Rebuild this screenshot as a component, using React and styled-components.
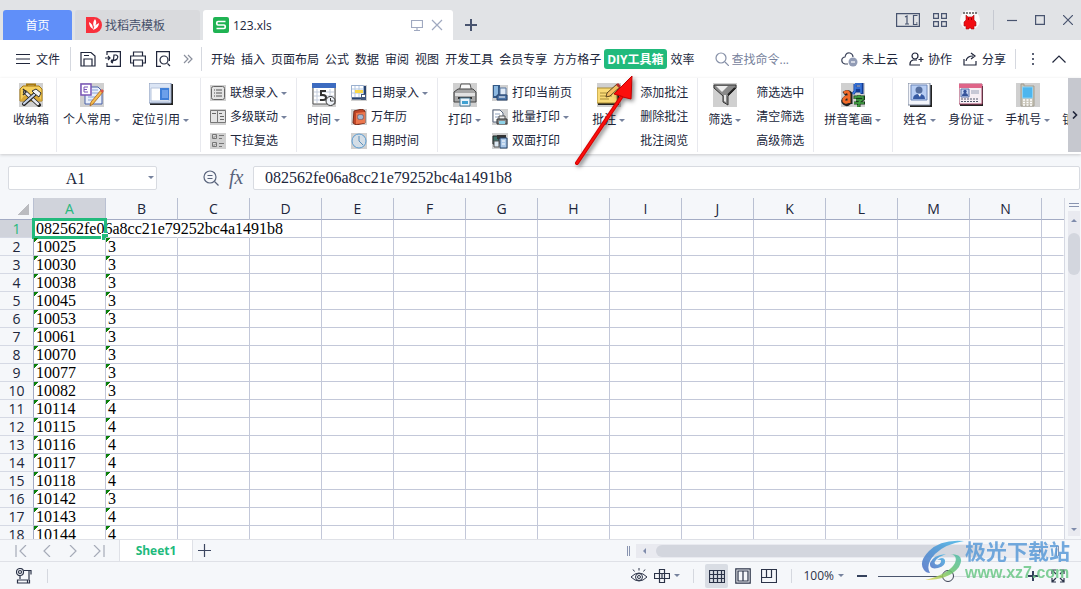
import React, { useState } from 'react';
import styled, { createGlobalStyle } from 'styled-components';

const columns = 'ABCDEFGHIJKLMN'.split('');

const rows = [
  ['082562fe06a8cc21e79252bc4a1491b8', ''],
  ['10025', '3'],
  ['10030', '3'],
  ['10038', '3'],
  ['10045', '3'],
  ['10053', '3'],
  ['10061', '3'],
  ['10070', '3'],
  ['10077', '3'],
  ['10082', '3'],
  ['10114', '4'],
  ['10115', '4'],
  ['10116', '4'],
  ['10117', '4'],
  ['10118', '4'],
  ['10142', '3'],
  ['10143', '4'],
  ['10144', '4'],
];

const menus = [
  '开始', '插入', '页面布局', '公式', '数据', '审阅', '视图',
  '开发工具', '会员专享', '方方格子', 'DIY工具箱', '效率',
];

// thin outline icons of the bars
const Line = ({ w = 16, h = 16, children }) => (
  <svg width={w} height={h} viewBox={`0 0 ${w} ${h}`} fill='none' stroke='currentColor' strokeWidth='1.2' aria-hidden='true'>
    {children}
  </svg>
);

// 24px colour icons of the ribbon
const Big = ({ plain, children }) => (
  <svg width='24' height='24' viewBox='0 0 24 24' aria-hidden='true'>
    {!plain && <path d='M0 0h24v24H0z' fill='#d0d0d0' />}
    {children}
  </svg>
);

const Small = ({ children }) => (
  <svg width='16' height='16' viewBox='0 0 16 16' aria-hidden='true'>
    <path d='M0 0h16v16H0z' fill='#d0d0d0' />
    {children}
  </svg>
);

const icons = {
  box: (
    <Big>
      <path d='M8 4V1.500h8V4' fill='none' stroke='#a87a10' strokeWidth='2' />
      <path d='M1 6l3-3h16l3 3v12H1z' fill='#f5cf5c' stroke='#a87a10' />
      <path d='M1 18l4-5h14l4 5z' fill='#d9a836' />
      <path d='M6 9l14 13' stroke='#222' strokeWidth='4' strokeLinecap='round' />
      <path d='M6 9l13 12' stroke='#e8e8ee' strokeWidth='2.4' strokeLinecap='round' />
      <path d='M17 10L5 21' stroke='#222' strokeWidth='4' strokeLinecap='round' />
      <path d='M17 10L5 20.500' stroke='#c8d4e8' strokeWidth='2.2' strokeLinecap='round' />
      <path d='M13 8l4-2 5 4-2 4-4-3z' fill='#f4f4f4' stroke='#333' />
      <path d='M4 6l3 3-3 3' fill='none' stroke='#333' strokeWidth='1.5' />
    </Big>
  ),
  personal: (
    <Big>
      <path d='M5 4h13l4 4v13H5z' fill='#e9f0fb' stroke='#4861a8' />
      <path d='M12 7h6M12 10h7M8 14h10M8 17h8' stroke='#8aa4d8' />
      <path d='M1 1h10v11H1z' fill='#fff' stroke='#7a56b8' strokeWidth='1.500' />
      <path d='M4 4h4M4 6.500h3M4 9h4M4 4v5' stroke='#7a56b8' />
      <path d='M21 7l2 2-10 12-3 2 1-4z' fill='#f5bd4f' stroke='#a86318' strokeWidth='.8' />
      <path d='M20 8l2-2 2 2-2 2z' fill='#d8574a' />
    </Big>
  ),
  locate: (
    <Big plain>
      <path d='M1 1h23v21H1z' fill='#222' />
      <path d='M0 0h22v20H0z' fill='#dbe5f5' stroke='#8c9cba' />
      <path d='M2 5h18v13H2z' fill='#fff' stroke='#b6c4dc' />
      <path d='M11 5h9v12h-9z' fill='#3f7fd8' />
      <path d='M13 7h6v8h-6z' fill='#6ca0ea' />
    </Big>
  ),
  time: (
    <Big>
      <path d='M1 3h22v18H1z' fill='#fff' stroke='#555' />
      <path d='M0 0h24v5H0z' fill='#3c6bc0' />
      <path d='M2 9h20M2 13h20M2 17h20M5 6v14M18 6v14' stroke='#c4cddd' />
      <path d='M14 8H9v4h2q3 0 3 2.500T11 17H8' fill='none' stroke='#333' strokeWidth='2' />
      <circle cx='18.500' cy='18' r='4.500' fill='#eef2f8' stroke='#333' />
      <path d='M18.500 15v3h3' fill='none' stroke='#333' />
    </Big>
  ),
  print: (
    <Big>
      <path d='M6 9l2-8h9l2 8z' fill='#fafafa' stroke='#555' />
      <path d='M1 9l4-3h15l3 3v10H1z' fill='#a6a6a6' stroke='#444' />
      <path d='M2 10h20v3H2z' fill='#e2e2e2' />
      <path d='M5 14h14v2H5z' fill='#333' />
      <path d='M7 15h10v8H7z' fill='#e9f4fb' stroke='#4b7894' />
      <path d='M9 18h6v3H9z' fill='#3fa1d2' />
    </Big>
  ),
  comment: (
    <Big>
      <path d='M1 6h21v16H1z' fill='#222' />
      <path d='M0 5h20v15H0z' fill='#f9da76' stroke='#a98b32' />
      <path d='M3 10h10M3 13h12M3 16h9' stroke='#a58a38' />
      <path d='M20 1l3 3-10 9-4 1 1-4z' fill='#f4c064' stroke='#5b4520' />
      <path d='M19 2l2-2 3 3-2 2z' fill='#b62d2d' />
    </Big>
  ),
  filter: (
    <Big>
      <path d='M1 2h22v3l-8 8v9l-5-3v-6L1 5z' fill='#8a8a8a' stroke='#333' />
      <path d='M3 3h12L9 9z' fill='#eee' />
      <path d='M11 12h2v7l-2-1z' fill='#e8e8e8' />
      <path d='M15 12l7-7' stroke='#222' strokeWidth='2' />
    </Big>
  ),
  pinyin: (
    <Big>
      <path d='M3 11q4-3 6 0v10M9 15H5q-4 3-1 5 3 2 5-2' fill='none' stroke='#222' strokeWidth='5' />
      <path d='M3 10q4-3 5 1v9M8 14H5q-4 3-1 5 2 1 4-1' fill='none' stroke='#f26a28' strokeWidth='3' />
      <path d='M14 1h7v10M14 1v7l-2 3M14 5h7M14 8h7' fill='none' stroke='#123b94' strokeWidth='3' />
      <path d='M14 1h6v9M14 1v7l-2 3M14 5h6' fill='none' stroke='#3b79e0' strokeWidth='1.500' />
      <path d='M18 12v2M14 16v-2h9v2M15 17h6l-3 2v4h-2M13 20h11' fill='none' stroke='#163b1a' strokeWidth='3' />
      <path d='M18 12v2M14 16v-2h8v2M15 17h6l-3 2v4h-2M13 20h10' fill='none' stroke='#45a845' strokeWidth='1.300' />
    </Big>
  ),
  name: (
    <Big plain>
      <path d='M2 2h22v22H2z' fill='#222' />
      <path d='M0 0h22v22H0z' fill='#f2f4fa' stroke='#7b869c' />
      <path d='M3 2h16v15H3z' fill='#b7cdf3' stroke='#6d87ba' />
      <circle cx='11' cy='7' r='3.500' fill='#566f9f' />
      <path d='M5 16q0-5 6-5t6 5z' fill='#375ba4' />
      <path d='M10 11h3l-1 3z' fill='#fff' />
    </Big>
  ),
  card: (
    <Big plain>
      <path d='M1 3h23v20H1z' fill='#222' />
      <path d='M0 1h23v20H0z' fill='#f7eff4' stroke='#a64768' />
      <path d='M0 1h23v4H0z' fill='#df6488' />
      <path d='M2 6h8v8H2z' fill='#c7d7f4' stroke='#5972a8' />
      <circle cx='6' cy='8.500' r='1.700' fill='#34539a' />
      <path d='M3 13q0-3 3-3t3 3z' fill='#34539a' />
      <path d='M12 8h8M12 10h8' stroke='#98a1b6' />
      <path d='M2 16h18M2 18.500h18' stroke='#50576a' strokeDasharray='2 1' />
    </Big>
  ),
  phone: (
    <Big>
      <path d='M5 4V1h3v2h10v20H5z' fill='#c9c5b8' stroke='#a19d90' />
      <path d='M6.500 4h10v11h-10z' fill='#4db6ee' stroke='#8ad0f4' />
      <path d='M7 17h9M7 19.500h9M7 22h9' stroke='#fff' strokeWidth='1.500' strokeDasharray='2 1.500' />
    </Big>
  ),
  list: (
    <Small>
      <rect x='1.500' y='1.500' width='13' height='13' rx='2' fill='#e4e4e4' stroke='#666' />
      <path d='M4 5h1M6 5h6M4 8h1M6 8h6M4 11h1M6 11h6' stroke='#555' />
    </Small>
  ),
  levels: (
    <Small>
      <path d='M.5 1.500h7v12h-7zM7.500 1.500h8v12h-8z' fill='#e4e4e4' stroke='#777' />
      <path d='M2 4.500h4M9 4.500h3M10 7.500h4M10 10.500h4' stroke='#666' />
    </Small>
  ),
  multi: (
    <Small>
      <path d='M2.500 1.500h4v4h-4zM2.500 9.500h4v4h-4z' fill='#ddd' stroke='#777' />
      <path d='M3 3.500l1 1 2-2M3 11.500l1 1 2-2M9 2.500h5M9 5.500h3M9 10.500h5M9 13.500h3' fill='none' stroke='#777' />
    </Small>
  ),
  dateIn: (
    <Small>
      <path d='M.5.500h12v12H.5z' fill='#fff' stroke='#9ab0cf' />
      <path d='M1 4h11M1 8h11M4 1v11M8 1v11' stroke='#b4c8e2' />
      <path d='M4 5h8v3H4z' fill='#f8d84a' />
      <path d='M1 13.500h13V1' fill='none' stroke='#26426f' strokeWidth='2' />
      <path d='M10 9h5v6h-5z' fill='#41577c' />
      <path d='M11 10h3v2h-3z' fill='#fff' />
    </Small>
  ),
  almanac: (
    <Small>
      <path d='M3 2l8-2 3 2v12l-9 2-3-2z' fill='#bf4526' stroke='#772d1c' />
      <path d='M5 4l9-1v11l-9 1z' fill='#ec774e' />
      <path d='M7 6h5v4H7z' fill='#fff' stroke='#54698c' />
      <path d='M8 8h3' stroke='#3d74bc' />
    </Small>
  ),
  clock: (
    <Small>
      <circle cx='8' cy='8' r='7' fill='#d3dde6' stroke='#5a9bd0' />
      <path d='M8 3v5l4 4' fill='none' stroke='#5a8fba' />
    </Small>
  ),
  page: (
    <Small>
      <path d='M1 0h7v13H1z' fill='#335987' />
      <path d='M2 1h4v10H2z' fill='#8cb8e0' />
      <path d='M8 3h6v7H8z' fill='#dfeaf7' stroke='#58779f' />
      <path d='M5 10h10v5H5z' fill='#4e77aa' stroke='#28456c' />
      <path d='M7 12h6' stroke='#fff' />
    </Small>
  ),
  batch: (
    <Small>
      <path d='M1 1h7l3 3v9H1z' fill='#fff' stroke='#59677e' />
      <path d='M3 5h5M3 8h4' stroke='#8fa1bd' />
      <path d='M7 7h6v4H7z' fill='#eee' stroke='#555' />
      <path d='M5 10h10v5H5z' fill='#888' stroke='#333' />
      <path d='M7 12h6v3H7z' fill='#8ed2e8' />
    </Small>
  ),
  duplex: (
    <Small>
      <path d='M1 3h6v8H1z' fill='#3d6f68' stroke='#222' />
      <path d='M5 2h9v4H5z' fill='#333' />
      <path d='M8 5h7v10H8z' fill='#a9c7e8' stroke='#24446d' />
      <path d='M2 8h5v6H2z' fill='#dce8f2' stroke='#555' />
      <path d='M10 8h3M10 11h3' stroke='#fff' />
    </Small>
  ),
};

const groups = [
  { pad: '0 7px 0 13px', big: [{ icon: 'box', label: '收纳箱', solo: true }] },
  { pad: '0 11px 0 6px', big: [{ icon: 'personal', label: '个人常用' }, { icon: 'locate', label: '定位引用' }] },
  {
    pad: '0 9px',
    small: [
      { icon: 'list', label: '联想录入', caret: true },
      { icon: 'levels', label: '多级联动', caret: true },
      { icon: 'multi', label: '下拉复选' },
    ],
  },
  {
    big: [{ icon: 'time', label: '时间' }],
    small: [
      { icon: 'dateIn', label: '日期录入', caret: true },
      { icon: 'almanac', label: '万年历' },
      { icon: 'clock', label: '日期时间' },
    ],
  },
  {
    big: [{ icon: 'print', label: '打印' }],
    small: [
      { icon: 'page', label: '打印当前页' },
      { icon: 'batch', label: '批量打印', caret: true },
      { icon: 'duplex', label: '双面打印' },
    ],
  },
  {
    gap: 15,
    big: [{ icon: 'comment', label: '批注' }],
    small: [{ label: '添加批注' }, { label: '删除批注' }, { label: '批注阅览' }],
  },
  {
    gap: 15,
    big: [{ icon: 'filter', label: '筛选' }],
    small: [{ label: '筛选选中' }, { label: '清空筛选' }, { label: '高级筛选' }],
  },
  { pad: '0 11px 0 10px', big: [{ icon: 'pinyin', label: '拼音笔画' }] },
  {
    big: [
      { icon: 'name', label: '姓名' },
      { icon: 'card', label: '身份证' },
      { icon: 'phone', label: '手机号' },
      { icon: 'card', label: '银行卡' },
    ],
  },
];

const TitleBar = () => (
  <Title>
    <HomeTab>首页</HomeTab>
    <TemplateTab>
      <svg width='16' height='16' viewBox='0 0 16 16' aria-hidden='true'>
        <path d='M0 0h8a8 8 0 0 1 0 16H0z' fill='#f9303c' />
        <path d='M9 2q3 4-1 8-2-4 1-8zM3 5q4 2 4 7-4-2-4-7zM13 6q0 5-6 7 1-5 6-7z' fill='#fff' />
      </svg>
      找稻壳模板
    </TemplateTab>
    <FileTab>
      <svg width='16' height='16' viewBox='0 0 16 16' aria-hidden='true'>
        <rect width='16' height='16' rx='2' fill='#1fb353' />
        <path d='M12.500 4.500H5q-1.200 0-1.200 1.200v1Q3.800 8 5 8h6q1.200 0 1.200 1.200v1q0 1.300-1.200 1.300H3.500' fill='none' stroke='#fff' strokeWidth='1.700' />
      </svg>
      <FileName>123.xls</FileName>
      <TabBtn aria-label='屏幕'>
        <Line w={12} h={12}>
          <path d='M.5 1.500h11v7H.5zM6 8.500v3M3 11.500h6' />
        </Line>
      </TabBtn>
      <TabBtn aria-label='关闭标签'>
        <Line w={12} h={12}>
          <path d='M1 1l10 10M11 1L1 11' />
        </Line>
      </TabBtn>
    </FileTab>
    <AddTab aria-label='新建标签'>
      <svg width='12' height='12' viewBox='0 0 12 12' stroke='currentColor' strokeWidth='2' aria-hidden='true'>
        <path d='M6 0v12M0 6h12' />
      </svg>
    </AddTab>
    <WindowBtns>
      <IconBtn aria-label='窗口布局'>
        <Line w={24} h={14}>
          <path d='M.6.600h22.800v12.800H.6zM21.500 2.500h-4v9h4M20 10h1.500M9 4l2-1v8M9 11h4' />
        </Line>
      </IconBtn>
      <IconBtn aria-label='应用'>
        <Line w={14} h={14}>
          <path d='M.6.600h4.800v4.800H.6zM8.600.600h4.800v4.800H8.600zM.6 8.600h4.800v4.800H.6zM8.600 8.600h4.800v4.800H8.600z' />
        </Line>
      </IconBtn>
      <IconBtn aria-label='账号'>
        <svg width='20' height='20' viewBox='0 0 20 20' aria-hidden='true'>
          <circle cx='10' cy='10' r='10' fill='#fafafa' />
          <path d='M3 3h14' fill='none' stroke='#555' strokeWidth='1.500' strokeDasharray='2 1' />
          <path d='M6 5l2 2h4l2-2v5l2 2v4h-2v3h-3v-1H9v1H6v-3H4v-4l2-2z' fill='#f20d12' stroke='#a11014' strokeWidth='.6' />
          <path d='M8 9h1M11 9h1' stroke='#300' />
        </svg>
      </IconBtn>
      <Divider $h={20} />
      <SizeBtns>
        <IconBtn aria-label='最小化'>
          <Line w={10} h={10}><path d='M0 5.500h10' /></Line>
        </IconBtn>
        <IconBtn aria-label='最大化'>
          <Line w={10} h={10}><path d='M.6.600h8.800v8.800H.6z' /></Line>
        </IconBtn>
        <IconBtn aria-label='关闭'>
          <Line w={10} h={10}><path d='M0 0l10 10M10 0L0 10' /></Line>
        </IconBtn>
      </SizeBtns>
    </WindowBtns>
  </Title>
);

const MenuBar = () => (
  <Menu>
    <MenuBtn>
      <Line w={14} h={12}><path d='M0 1.500h14M0 6h14M0 10.500h14' /></Line>
      文件
    </MenuBtn>
    <Divider $h={24} />
    <QuickTools>
      <IconBtn aria-label='保存'>
        <Line><path d='M1 1.500h10l4 3.500v10H1zM4 15V8h8v7M4 4.500h5' /></Line>
      </IconBtn>
      <IconBtn aria-label='输出为PDF'>
        <Line><path d='M2 4V.600h13.400v14.800H2V12M0 7h5M3 5l2 2-2 2M7 12q2-3 2-8h2q3 1 1 4-2 2-5 1-2 2 1 3' /></Line>
      </IconBtn>
      <IconBtn aria-label='打印'>
        <Line><path d='M3.500 5V1h9v4M3.500 12H.6V5h14.800v7h-2.900M3.500 9h9v6h-9z' /></Line>
      </IconBtn>
      <IconBtn aria-label='打印预览'>
        <Line><path d='M6 15.400H1.600V.600h12.800V10M12.500 12.500l2.500 2.500' /><circle cx='9' cy='9' r='4' /></Line>
      </IconBtn>
      <MoreBtn aria-label='更多'>
        <Line w={10} h={10}><path d='M1 1l4 4-4 4M5 1l4 4-4 4' /></Line>
      </MoreBtn>
    </QuickTools>
    <Divider $h={24} />
    <MenuList>
      {menus.map((name) => (
        <MenuItem key={name} $active={name === 'DIY工具箱'}>{name}</MenuItem>
      ))}
    </MenuList>
    <Search>
      <Line w={14} h={14}><circle cx='6' cy='6' r='5' /><path d='M10 10l4 4' /></Line>
      <input aria-label='查找命令' placeholder='查找命令...' />
    </Search>
    <MenuRight>
      <ShareBtn>
        <svg width='17' height='16' viewBox='0 0 17 16' fill='none' stroke='#40485f' strokeWidth='1.200' aria-hidden='true'>
          <path d='M7 13H4q-4-1-3-5 1-2 3-2 1-5 5-4 3 1 3 4' />
          <circle cx='12' cy='11' r='4.500' fill='#919bb5' stroke='none' />
          <path d='M10 11h4' stroke='#fff' />
        </svg>
        未上云
      </ShareBtn>
      <ShareBtn>
        <Line w={15} h={14}><circle cx='6' cy='4' r='3' /><path d='M8 8H4Q.6 9 1 13h10M12 5v5M9.500 7.500h5' /></Line>
        协作
      </ShareBtn>
      <ShareBtn>
        <Line w={15} h={14}><path d='M1 7v6h12V9M3 9q1-5 7-5M8 1l4 3-4 3' /></Line>
        分享
      </ShareBtn>
      <Divider $h={20} />
      <IconBtn aria-label='更多选项'>
        <svg width='2' height='12' viewBox='0 0 2 12' fill='#5b6275' aria-hidden='true'>
          <path d='M0 0h2v2H0zM0 5h2v2H0zM0 10h2v2H0z' />
        </svg>
      </IconBtn>
      <IconBtn aria-label='折叠功能区'>
        <Line w={14} h={8}><path d='M.5 7.500L7 1l6.500 6.500' /></Line>
      </IconBtn>
    </MenuRight>
  </Menu>
);

const Ribbon = () => (
  <RibbonBar>
    <RibbonScroll>
      {groups.map((group, i) => (
        <Group key={i} $pad={group.pad} $gap={group.gap}>
          {group.big && (
            <BigList>
              {group.big.map((item) => (
                <BigBtn key={item.label}>
                  {icons[item.icon]}
                  <Label>{item.label}{!item.solo && <Caret />}</Label>
                </BigBtn>
              ))}
            </BigList>
          )}
          {group.small && (
            <SmallList>
              {group.small.map((item) => (
                <SmallBtn key={item.label}>
                  {item.icon && icons[item.icon]}
                  <Label>{item.label}{item.caret && <Caret />}</Label>
                </SmallBtn>
              ))}
            </SmallList>
          )}
        </Group>
      ))}
    </RibbonScroll>
    <RibbonNext aria-label='向右滚动'>
      <Line w={6} h={8}><path d='M1 .5L4.500 4 1 7.500' strokeWidth='1.600' /></Line>
    </RibbonNext>
  </RibbonBar>
);

const Sheet = () => (
  <SheetArea>
    <GridWrap>
      <Grid>
        <colgroup>
          <col width='34' />
          {columns.map((c) => <col key={c} width='72' />)}
          <col />
        </colgroup>
        <thead>
          <tr>
            <Corner aria-label='全选' />
            {columns.map((c) => <ColHead key={c} $active={c === 'A'}>{c}</ColHead>)}
            <ColHead $last />
          </tr>
        </thead>
        <tbody>
          {rows.map(([a, b], i) => (
            <tr key={i}>
              <RowHead $active={i === 0}>{i + 1}</RowHead>
              <Cell $flag={i > 0}>{a}{i === 0 && <Selection />}</Cell>
              <Cell $flag={i > 0} $open={i === 0}>{b}</Cell>
              {columns.slice(2).map((c) => <Cell key={c} $open={i === 0 && c === 'C'} />)}
              <Cell $open />
            </tr>
          ))}
        </tbody>
      </Grid>
    </GridWrap>
    <VScroll>
      <SplitH />
      <VTrack>
        <Tri $dir='up' />
        <VThumb />
        <Tri $dir='down' />
      </VTrack>
    </VScroll>
  </SheetArea>
);

const SheetTabs = () => (
  <TabsBar>
    <SheetNav>
      <IconBtn aria-label='第一张'><Line w={12} h={12}><path d='M1 0v12M11 0L5 6l6 6' /></Line></IconBtn>
      <IconBtn aria-label='上一张'><Line w={12} h={12}><path d='M9 0L3 6l6 6' /></Line></IconBtn>
      <IconBtn aria-label='下一张'><Line w={12} h={12}><path d='M3 0l6 6-6 6' /></Line></IconBtn>
      <IconBtn aria-label='最后一张'><Line w={12} h={12}><path d='M11 0v12M1 0l6 6-6 6' /></Line></IconBtn>
    </SheetNav>
    <SheetTab>Sheet1</SheetTab>
    <AddSheet aria-label='新建工作表'>
      <Line w={13} h={13}><path d='M6.500 0v13M0 6.500h13' /></Line>
    </AddSheet>
    <HScroll>
      <SplitV />
      <HTrack>
        <Tri $dir='left' />
        <HThumb />
        <Tri $dir='right' />
      </HTrack>
      <SplitV />
    </HScroll>
  </TabsBar>
);

const StatusBar = () => {
  const [zoom, setZoom] = useState(50);
  return (
    <Status>
      <StatusLeft>
        <IconBtn aria-label='宏'>
          <Line><circle cx='4' cy='4' r='3.500' /><circle cx='4' cy='4' r='1.500' /><path d='M8 2.500h7v4M13 2.500v10M4 8v3M1.500 12h10v3h-10zM11.500 15h2v-3' /></Line>
        </IconBtn>
        <Divider $h={14} />
      </StatusLeft>
      <StatusRight>
        <IconBtn aria-label='护眼模式'>
          <Line><path d='M0 9q8-8 16 0-8 8-16 0zM8 0v2.500M2 1.500l1.500 2M14 1.500l-1.500 2' strokeWidth='1' /><circle cx='8' cy='9' r='3.500' strokeWidth='1' /><circle cx='8' cy='9' r='1.500' strokeWidth='1' /></Line>
        </IconBtn>
        <SpotBtn aria-label='聚光灯'>
          <Line><path d='M5.500 1.500h5v13h-5zM.5 5.500h15v5H.5zM8 5.500v5' /></Line>
          <Caret />
        </SpotBtn>
        <Divider $h={14} />
        <Views>
          <ViewBtn $active aria-label='普通视图'>
            <Line><path d='M.5 2.500h15v12H.5zM.5 6.500h15M.5 10.500h15M4.500 2.500v12M8.500 2.500v12M12.500 2.500v12' /></Line>
          </ViewBtn>
          <ViewBtn aria-label='分页预览'>
            <Line><path d='M.8.800h14.400v14.400H.8zM3 3h10v10H3zM8 3v10' /></Line>
          </ViewBtn>
          <ViewBtn aria-label='页面布局'>
            <Line><path d='M.5 1.500h15v13H.5zM.5 9.500h10v-8M5.500 1.500v8' /></Line>
          </ViewBtn>
        </Views>
        <Divider $h={14} />
        <PercentBtn>100%<Caret /></PercentBtn>
        <ZoomBtn aria-label='缩小'>
          <svg width='10' height='10' viewBox='0 0 10 10' stroke='currentColor' strokeWidth='2' aria-hidden='true'><path d='M0 5h10' /></svg>
        </ZoomBtn>
        <Slider type='range' aria-label='缩放' min='0' max='100' value={zoom} onChange={(e) => setZoom(e.target.value)} />
        <ZoomBtn aria-label='放大'>
          <svg width='10' height='10' viewBox='0 0 10 10' stroke='currentColor' strokeWidth='2' aria-hidden='true'><path d='M0 5h10M5 0v10' /></svg>
        </ZoomBtn>
        <FullBtn aria-label='全屏'>
          <Line w={14} h={14}><path d='M1 5V1h4M9 1h4v4M13 9v4H9M5 13H1V9M1 1l4 4M13 1L9 5M13 13L9 9M1 13l4-4' /></Line>
        </FullBtn>
      </StatusRight>
    </Status>
  );
};

const App = () => (
  <Page>
    <GlobalStyle />
    <TitleBar />
    <MenuBar />
    <Ribbon />
    <FormulaBar>
      <NameBox>
        <input aria-label='名称框' defaultValue='A1' />
        <Caret />
      </NameBox>
      <FormulaTools>
        <IconBtn aria-label='浏览公式'>
          <Line><circle cx='7' cy='7' r='6' /><path d='M4.500 5.500h5M4.500 8.500h5M11.500 11.500l4 4' /></Line>
        </IconBtn>
        <FxBtn>fx</FxBtn>
      </FormulaTools>
      <FormulaInput aria-label='编辑栏' defaultValue={rows[0][0]} />
    </FormulaBar>
    <Sheet />
    <SheetTabs />
    <StatusBar />
    <Arrow viewBox='0 0 70 100' aria-hidden='true'>
      <path d='M7 91L52 24' stroke='#d40000' strokeWidth='4' strokeLinecap='round' />
      <path d='M7 91L52 24' stroke='#fb0f0c' strokeWidth='2' strokeLinecap='round' />
      <path d='M62 4L44 22l7 2 2 1 8 2z' fill='#fb0f0c' stroke='#c40000' />
    </Arrow>
    <Watermark>
      <svg width='44' height='42' viewBox='0 0 44 42' aria-hidden='true'>
        <defs>
          <linearGradient id='swirlBlue' x1='0' y1='1' x2='1' y2='0'>
            <stop offset='0' stopColor='#4f6fc4' />
            <stop offset='1' stopColor='#42b6e6' />
          </linearGradient>
          <linearGradient id='swirlGreen' x1='0' y1='1' x2='1' y2='0'>
            <stop offset='0' stopColor='#e8d64a' />
            <stop offset='.5' stopColor='#6cc56b' />
            <stop offset='1' stopColor='#4cbcae' />
          </linearGradient>
        </defs>
        <path d='M43 1Q20-1 8 11-3 22 3 30q2 3 6 3Q4 25 14 14 24 4 43 1z' fill='url(#swirlBlue)' />
        <path d='M25 14q-13 1-16 9-1 7 8 5 8-2 7-8-2-4-8 0 5-1 4 2-2 4-6 2-2-5 11-10z' fill='url(#swirlBlue)' />
        <path d='M29 14q8 1 5 9Q28 34 4 40q24 0 34-13 7-13-9-13z' fill='url(#swirlGreen)' />
      </svg>
      <MarkText>
        <strong>极光下载站</strong>
        <span>www.xz7.com</span>
      </MarkText>
    </Watermark>
  </Page>
);

export default App;

const GlobalStyle = createGlobalStyle`
  * {
    box-sizing: border-box;
  }
  body {
    margin: 0;
    overflow: hidden;
    font-family: "Open Sans", "Noto Sans CJK SC", sans-serif;
    font-size: 12px;
    color: #20263b;
  }
  button, input {
    font: inherit;
    color: inherit;
    border: 0;
    padding: 0;
    background: none;
    outline: none;
  }
  button {
    display: flex;
    align-items: center;
    justify-content: center;
    flex: none;
    white-space: nowrap;
  }
  svg {
    display: block;
    flex: none;
  }
`;

const Page = styled.div`
  position: relative;
  display: flex;
  flex-direction: column;
  height: 100vh;
  background: #f5f7fa;
`;

const IconBtn = styled.button`
  color: inherit;
`;

const Divider = styled.span`
  flex: none;
  width: 1px;
  height: ${({ $h }) => $h}px;
  background: #d5d8df;
`;

const Caret = styled.i`
  flex: none;
  border: 3px solid transparent;
  border-top-color: #76829d;
  border-bottom: 0;
`;

const Title = styled.header`
  display: flex;
  align-items: flex-end;
  flex: none;
  gap: 3px;
  height: 40px;
  padding-left: 3px;
  background: #e1e3e6;
`;

const Tab = styled.button`
  height: 30px;
  border-radius: 3px 3px 0 0;
`;

const HomeTab = styled(Tab)`
  width: 69px;
  color: #fff;
  background: #608ff9;
`;

const TemplateTab = styled(Tab)`
  justify-content: flex-start;
  gap: 3px;
  width: 125px;
  padding-left: 11px;
  color: #46506a;
  background: #d9dadd;
`;

const FileTab = styled.div`
  display: flex;
  align-items: center;
  width: 250px;
  height: 30px;
  padding: 0 10px;
  background: #fff;
  border-radius: 3px 3px 0 0;
`;

const FileName = styled.span`
  flex: 1;
  padding-left: 4px;
`;

const TabBtn = styled.button`
  margin-left: 8px;
  color: #a0a9c0;
`;

const AddTab = styled.button`
  width: 30px;
  height: 30px;
  color: #48546f;
`;

const WindowBtns = styled.div`
  display: flex;
  align-items: center;
  align-self: stretch;
  gap: 13px;
  margin-left: auto;
  padding-right: 8px;
  color: #48546f;

  & > ${Divider} {
    background: #c6c9d1;
  }
`;

const SizeBtns = styled.div`
  display: flex;
  gap: 18px;
`;

const Menu = styled.nav`
  display: flex;
  align-items: center;
  flex: none;
  height: 38px;
  padding: 0 15px 0 16px;
  background: #fff;
`;

const MenuBtn = styled.button`
  gap: 6px;
  margin-right: 10px;
`;

const QuickTools = styled.div`
  display: flex;
  flex: none;
  gap: 9px;
  padding: 0 8px 0 9px;
`;

const MoreBtn = styled.button`
  margin-left: 3px;
  color: #8a8f9c;
`;

const MenuList = styled.div`
  display: flex;
  flex: none;
  gap: 6px;
  padding-left: 9px;
`;

const MenuItem = styled.button`
  height: 20px;
  padding: ${({ $active }) => ($active ? '0 3px' : '0')};
  margin: ${({ $active }) => ($active ? '0 -2px 0 -3px' : '0')};
  border-radius: 3px;
  color: ${({ $active }) => ($active ? '#fff' : 'inherit')};
  background: ${({ $active }) => ($active ? '#21ba7c' : 'none')};
  font-weight: ${({ $active }) => ($active ? 700 : 400)};
`;

const Search = styled.label`
  display: flex;
  align-items: center;
  gap: 3px;
  padding-left: 20px;
  color: #8791a8;

  & input {
    width: 80px;
  }
  & input::placeholder {
    color: #77829c;
  }
`;

const MenuRight = styled.div`
  display: flex;
  align-items: center;
  flex: none;
  margin-left: auto;

  & > ${Divider} {
    margin: 0 16px 0 9px;
  }
  & > :last-child {
    margin-left: 18px;
  }
`;

const ShareBtn = styled.button`
  gap: 4px;

  & + & {
    margin-left: 11px;
  }
`;

const RibbonBar = styled.section`
  display: flex;
  flex: none;
  height: 76px;
  background: #fff;
  box-shadow: 0 1px 3px rgba(0, 0, 0, 0.18);
`;

const RibbonScroll = styled.div`
  display: flex;
  flex: 1;
  overflow: hidden;
`;

const Group = styled.div`
  display: flex;
  flex: none;
  gap: ${({ $gap }) => $gap || 11}px;
  height: 74px;
  padding: ${({ $pad }) => $pad || '0 9px 0 10px'};
  border-right: 1px solid #e8e9ee;
`;

const BigList = styled.div`
  display: flex;
  gap: 12px;
`;

const BigBtn = styled.button`
  flex-direction: column;
  justify-content: flex-start;
  gap: 3px;
  padding-top: 5px;
`;

const Label = styled.span`
  display: flex;
  align-items: center;
  gap: 3px;
  line-height: 20px;
`;

const SmallList = styled.div`
  display: flex;
  flex-direction: column;
  align-items: flex-start;
  padding-top: 3px;
`;

const SmallBtn = styled.button`
  gap: 4px;
  height: 24px;
`;

const RibbonNext = styled.button`
  width: 13px;
  height: 74px;
  background: #c6c8cf;
`;

const FormulaBar = styled.section`
  display: flex;
  align-items: center;
  flex: none;
  height: 44px;
  padding: 3px 1px 0 8px;
`;

const NameBox = styled.label`
  display: flex;
  align-items: center;
  flex: none;
  width: 149px;
  height: 24px;
  padding-right: 2px;
  background: #fff;
  border: 1px solid #d8dbe1;
  border-radius: 2px;

  & input {
    flex: 1;
    min-width: 0;
    padding: 2px 6px 0 0;
    text-align: center;
    font-family: "Liberation Serif", serif;
    font-size: 16px;
  }
`;

const FormulaTools = styled.div`
  display: flex;
  align-items: center;
  flex: none;
  gap: 10px;
  width: 96px;
  padding-left: 46px;
  color: #59647c;
`;

const FxBtn = styled.button`
  font-family: "Liberation Serif", serif;
  font-size: 20px;
  font-style: italic;
`;

const FormulaInput = styled.input`
  flex: 1;
  height: 24px;
  padding: 0 11px;
  background: #fff;
  border: 1px solid #d8dbe1;
  border-radius: 2px;
  font-family: "Liberation Serif", serif;
  font-size: 16px;
`;

const SheetArea = styled.main`
  display: flex;
  flex: 1;
  min-height: 0;
`;

const GridWrap = styled.div`
  flex: 1;
  min-width: 0;
  overflow: hidden;
  border-right: 1px solid #d5d8e2;
`;

const Grid = styled.table`
  width: 100%;
  table-layout: fixed;
  border-spacing: 0;
  background: #fff;
`;

const HeadCell = styled.th`
  padding: 0;
  font-size: 14px;
  font-weight: 400;
  color: ${({ $active }) => ($active ? '#25b87c' : 'inherit')};
  background: ${({ $active }) => ($active ? '#d0d3db' : '#f5f7fa')};
`;

const Corner = styled(HeadCell)`
  height: 22px;
  border-right: 1px solid #b9c0d2;
  border-bottom: 1px solid #a3abc4;
  background: linear-gradient(135deg, transparent 50%, #bbbcc0 50%) 18px 6px / 11px 11px no-repeat #f5f7fa;
`;

const ColHead = styled(HeadCell)`
  height: 22px;
  line-height: 21px;
  border-right: ${({ $last }) => ($last ? '0' : '1px solid #b9c0d2')};
  border-bottom: 1px solid #a3abc4;
`;

const RowHead = styled(HeadCell)`
  height: 18px;
  line-height: 17px;
  border-right: 1px solid #a3abc4;
  border-bottom: 1px solid #d5d9e4;
`;

const Cell = styled.td`
  position: relative;
  height: 18px;
  padding: 1px 0 0 2px;
  line-height: 16px;
  font-family: "Liberation Serif", serif;
  font-size: 16px;
  color: #000;
  white-space: nowrap;
  border-right: 1px solid ${({ $open }) => ($open ? 'transparent' : '#c3c8d9')};
  border-bottom: 1px solid #c3c8d9;
  background: ${({ $flag }) => ($flag ? 'linear-gradient(135deg, #0b800b 3px, transparent 3px)' : 'none')};
`;

const Selection = styled.span`
  position: absolute;
  inset: -2px -2px -2px -2px;
  border: 3px solid #21ba7c;

  &::after {
    content: '';
    position: absolute;
    right: -4px;
    bottom: -4px;
    width: 6px;
    height: 6px;
    background: #21ba7c;
    border: 1px solid #fff;
    border-width: 1px 0 0 1px;
  }
`;

const VScroll = styled.div`
  display: flex;
  flex-direction: column;
  flex: none;
  width: 16px;
  padding: 5px 1px 3px 3px;
`;

const SplitH = styled.span`
  align-self: center;
  width: 10px;
  height: 4px;
  border: 1px solid #8994b0;
  border-width: 1px 0;
`;

const VTrack = styled.div`
  display: flex;
  flex-direction: column;
  align-items: center;
  flex: 1;
  margin-top: 4px;
  padding: 8px 0 5px;
  background: #e9eaf0;

  & > :last-child {
    margin-top: auto;
  }
`;

const VThumb = styled.div`
  width: 12px;
  height: 42px;
  margin-top: 11px;
  border-radius: 6px;
  background: #d3d6de;
`;

const dirs = {
  up: 'border-bottom-color: #7f8bab; border-top: 0;',
  down: 'border-top-color: #7f8bab; border-bottom: 0;',
  left: 'border-right-color: #7f8bab; border-left: 0;',
  right: 'border-left-color: #7f8bab; border-right: 0;',
};

const Tri = styled.i`
  flex: none;
  border: 3px solid transparent;
  ${({ $dir }) => dirs[$dir]}
`;

const TabsBar = styled.section`
  display: flex;
  flex: none;
  height: 23px;
  border-top: 1px solid #dfe1e7;
  border-bottom: 1px solid #dfe1e7;
`;

const SheetNav = styled.div`
  display: flex;
  align-items: center;
  gap: 14px;
  width: 119px;
  padding-left: 15px;
  color: #a6abb8;
`;

const SheetTab = styled.button`
  width: 74px;
  color: #21ba7c;
  font-weight: 700;
  background: #fff;
  border: 1px solid #dfe1e7;
  border-width: 0 1px;
`;

const AddSheet = styled.button`
  margin-left: 5px;
  color: #3c4660;
`;

const HScroll = styled.div`
  display: flex;
  align-items: center;
  gap: 6px;
  width: 42%;
  margin-left: auto;
  padding-right: 22px;
`;

const SplitV = styled.span`
  width: 3px;
  height: 10px;
  border: 1px solid #8994b0;
  border-width: 0 1px;
`;

const HTrack = styled.div`
  display: flex;
  align-items: center;
  flex: 1;
  height: 14px;
  padding: 0 8px 0 7px;
  background: #e9eaf0;

  & > :last-child {
    margin-left: auto;
  }
`;

const HThumb = styled.div`
  width: 82%;
  height: 12px;
  margin-left: 10px;
  border-radius: 6px;
  background: #d3d6de;
`;

const Status = styled.footer`
  display: flex;
  align-items: center;
  justify-content: space-between;
  flex: none;
  height: 27px;
  padding: 0 16px;
  color: #2b3348;
`;

const StatusLeft = styled.div`
  display: flex;
  align-items: center;
  gap: 15px;
`;

const StatusRight = styled.div`
  display: flex;
  align-items: center;
  gap: 11px;
`;

const DropBtn = styled.button`
  gap: 4px;
`;

const SpotBtn = styled(DropBtn)`
  margin: 0 2px 0 -4px;
`;

const PercentBtn = styled(DropBtn)`
  margin-right: 2px;
`;

const Views = styled.div`
  display: flex;
  gap: 3px;
`;

const ViewBtn = styled.button`
  width: 23px;
  height: 24px;
  border-radius: 2px;
  background: ${({ $active }) => ($active ? '#d9dde4' : 'none')};
`;

const ZoomBtn = styled.button`
  color: #34415c;
`;

const FullBtn = styled(IconBtn)`
  margin-left: 2px;
`;

const Slider = styled.input`
  appearance: none;
  width: 139px;
  height: 12px;
  margin: 0;
  background: linear-gradient(to right, #4a556d 50%, #d5d8df 50%) 0 6px / 100% 1px no-repeat;

  &::-webkit-slider-thumb {
    appearance: none;
    width: 12px;
    height: 12px;
    border: 1px solid #3b4254;
    border-radius: 50%;
    background: #f5f7fa;
  }
`;

const Arrow = styled.svg`
  position: absolute;
  top: 72px;
  left: 570px;
  width: 70px;
  height: 100px;
  fill: none;
  pointer-events: none;
  filter: drop-shadow(2px 2px 2px rgba(0, 0, 0, 0.5));
`;

const Watermark = styled.div`
  position: absolute;
  right: 11px;
  bottom: 5px;
  display: flex;
  opacity: 0.85;
  pointer-events: none;
`;

const MarkText = styled.div`
  display: flex;
  flex-direction: column;
  line-height: 22px;

  & strong {
    font-size: 21px;
    color: #5a9bd8;
  }
  & span {
    font-family: "Liberation Sans", sans-serif;
    font-size: 16px;
    font-weight: 700;
    color: #6cc887;
  }
`;
